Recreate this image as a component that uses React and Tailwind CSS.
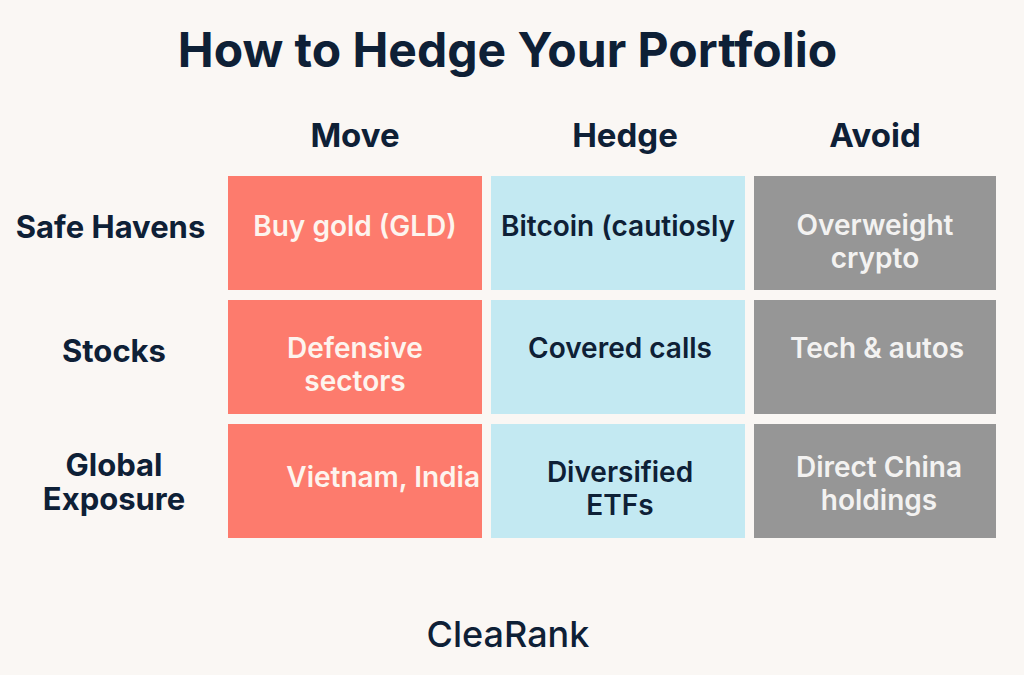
import React from "react";

const rows = [
  {
    label: ["Safe Havens"],
    labelPad: "pt-[34px] pl-[2px]",
    cells: [
      { text: ["Buy gold (GLD)"], pad: "pt-[34px]" },
      { text: ["Bitcoin (cautiosly"], pad: "pt-[34px]" },
      { text: ["Overweight", "crypto"], pad: "pt-[33px]" },
    ],
  },
  {
    label: ["Stocks"],
    labelPad: "pt-[34px] pl-[9px]",
    cells: [
      { text: ["Defensive", "sectors"], pad: "pt-[32px]" },
      { text: ["Covered calls"], pad: "pt-[32px] pl-[4px]" },
      { text: ["Tech & autos"], pad: "pt-[32px] pl-[4px]" },
    ],
  },
  {
    label: ["Global", "Exposure"],
    labelPad: "pt-[24px] pl-[9px]",
    cells: [
      { text: ["Vietnam, India"], pad: "pt-[37px] items-end pr-[2px]" },
      { text: ["Diversified", "ETFs"], pad: "pt-[32px] pl-[4px]" },
      { text: ["Direct China", "holdings"], pad: "pt-[27px] pl-[8px]" },
    ],
  },
];

const tones = [
  "bg-[#fd7b6d] text-[#fdf4ee]",
  "bg-[#c3e9f2] text-[#0e2036]",
  "bg-[#969696] text-[#f3f2f1]",
];

const Cell = ({ cell, tone }) => (
  <div className={`h-[114px] overflow-hidden flex flex-col items-center text-center whitespace-nowrap text-[28px] leading-[33px] font-semibold ${tone} ${cell.pad}`}>
    {cell.text.map((t) => (
      <span key={t}>{t}</span>
    ))}
  </div>
);

export default function App() {
  return (
    <div className="w-full h-[675px] bg-[#faf7f4] flex flex-col items-center text-[#0e2036] font-['Inter',sans-serif]">
      <h1 className="pt-[22px] mr-[9px] text-[48px] leading-[56px] font-bold">How to Hedge Your Portfolio</h1>

      <div className="mt-[37px] self-start grid grid-cols-[219px_254px_254px_242px] gap-x-[9px] text-[33px] leading-[40px] font-bold">
        <div />
        <div className="text-center">Move</div>
        <div className="text-center pl-[14px]">Hedge</div>
        <div className="text-center">Avoid</div>
      </div>

      <div className="mt-[21px] self-start grid grid-cols-[219px_254px_254px_242px] gap-x-[9px] gap-y-[10px]">
        {rows.map((row) => (
          <React.Fragment key={row.label.join(" ")}>
            <div className={`h-[114px] flex flex-col items-center text-center text-[31px] leading-[34px] font-bold whitespace-nowrap ${row.labelPad}`}>
              {row.label.map((l) => (
                <span key={l}>{l}</span>
              ))}
            </div>
            {row.cells.map((c, i) => (
              <Cell key={i} cell={c} tone={tones[i]} />
            ))}
          </React.Fragment>
        ))}
      </div>

      <div className="mt-[76px] mr-[8px] text-[36px] leading-[40px] font-medium">CleaRank</div>
    </div>
  );
}
